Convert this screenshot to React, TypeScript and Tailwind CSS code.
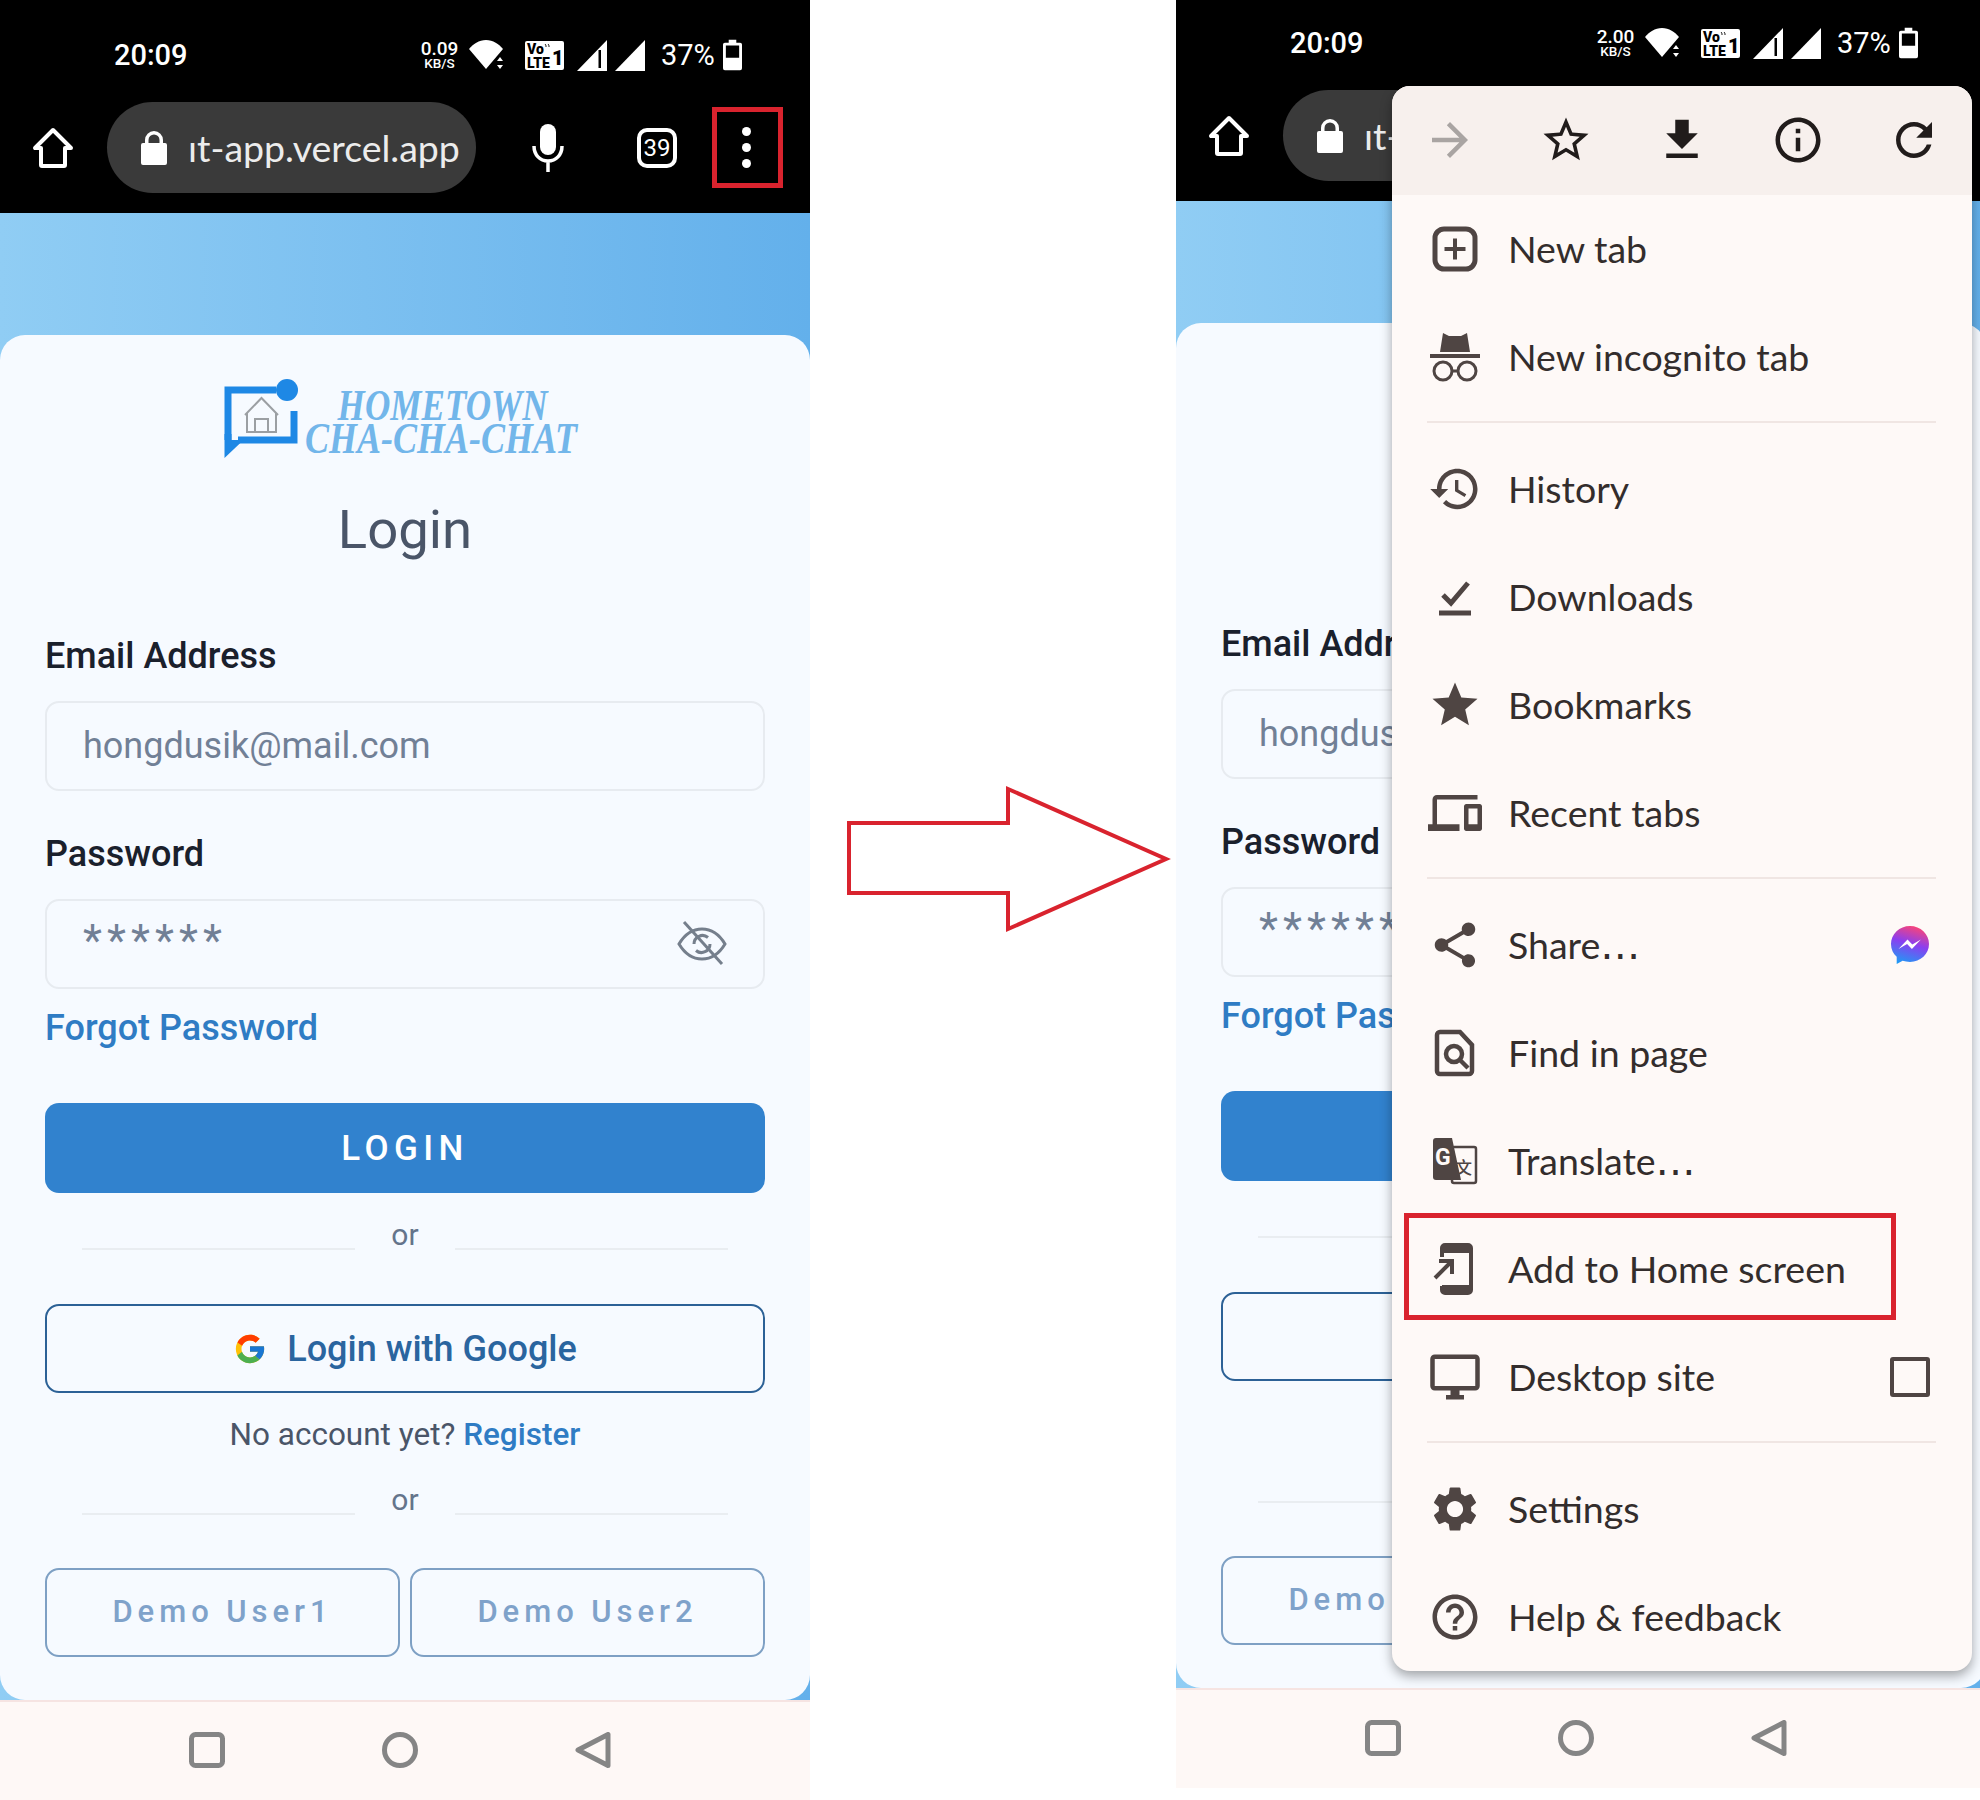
import React from "react";

const MENU_FONT = "font-['Lato','Noto_Sans',sans-serif]";

function Mat({ d, size = 54, className = "" }: { d: string; size?: number; className?: string }) {
  return (
    <svg width={size} height={size} viewBox="0 0 24 24" fill="currentColor" className={className}>
      <path d={d} />
    </svg>
  );
}

const P = {
  forward: "M12 4l-1.41 1.41L16.17 11H4v2h12.17l-5.58 5.59L12 20l8-8z",
  starO: "M22 9.24l-7.19-.62L12 2 9.19 8.63 2 9.24l5.46 4.73L5.82 21 12 17.27 18.18 21l-1.63-7.03L22 9.24zM12 15.4l-3.76 2.27 1-4.28-3.32-2.88 4.38-.38L12 6.1l1.71 4.04 4.38.38-3.32 2.88 1 4.28L12 15.4z",
  download: "M19 9h-4V3H9v6H5l7 7 7-7zM5 18v2h14v-2H5z",
  info: "M11 7h2v2h-2zm0 4h2v6h-2zm1-9C6.48 2 2 6.48 2 12s4.48 10 10 10 10-4.48 10-10S17.52 2 12 2zm0 18c-4.41 0-8-3.59-8-8s3.59-8 8-8 8 3.59 8 8-3.59 8-8 8z",
  refresh: "M17.65 6.35C16.2 4.9 14.21 4 12 4c-4.42 0-7.99 3.58-7.99 8s3.57 8 7.99 8c3.73 0 6.84-2.55 7.73-6h-2.08c-.82 2.33-3.04 4-5.65 4-3.31 0-6-2.69-6-6s2.69-6 6-6c1.66 0 3.14.69 4.22 1.78L13 11h7V4l-2.35 2.35z",
  history: "M13 3c-4.97 0-9 4.03-9 9H1l3.89 3.89.07.14L9 12H6c0-3.87 3.13-7 7-7s7 3.13 7 7-3.13 7-7 7c-1.93 0-3.68-.79-4.94-2.06l-1.42 1.42C8.27 19.99 10.51 21 13 21c4.97 0 9-4.03 9-9s-4.03-9-9-9zm-1 5v5l4.28 2.54.72-1.21-3.5-2.08V8H12z",
  star: "M12 17.27L18.18 21l-1.64-7.03L22 9.24l-7.19-.61L12 2 9.19 8.63 2 9.24l5.46 4.73L5.82 21z",
  devices: "M4 6h18V4H4c-1.1 0-2 .9-2 2v11H0v3h14v-3H4V6zm19 2h-6c-.55 0-1 .45-1 1v10c0 .55.45 1 1 1h6c.55 0 1-.45 1-1V9c0-.55-.45-1-1-1zm-1 9h-4v-7h4v7z",
  share: "M18 16.08c-.76 0-1.44.3-1.96.77L8.91 12.7c.05-.23.09-.46.09-.7s-.04-.47-.09-.7l7.05-4.11c.54.5 1.25.81 2.04.81 1.66 0 3-1.34 3-3s-1.34-3-3-3-3 1.34-3 3c0 .24.04.47.09.7L8.04 9.81C7.5 9.31 6.79 9 6 9c-1.66 0-3 1.34-3 3s1.34 3 3 3c.79 0 1.5-.31 2.04-.81l7.12 4.16c-.05.21-.08.43-.08.65 0 1.61 1.31 2.92 2.92 2.92 1.61 0 2.92-1.31 2.92-2.92s-1.31-2.92-2.92-2.92z",
  settings: "M19.14 12.94c.04-.3.06-.61.06-.94 0-.32-.02-.64-.07-.94l2.03-1.58c.18-.14.23-.41.12-.61l-1.92-3.32c-.12-.22-.37-.29-.59-.22l-2.39.96c-.5-.38-1.03-.7-1.62-.94l-.36-2.54c-.04-.24-.24-.41-.48-.41h-3.84c-.24 0-.43.17-.47.41l-.36 2.54c-.59.24-1.13.57-1.62.94l-2.39-.96c-.22-.08-.47 0-.59.22L2.74 8.87c-.12.21-.08.47.12.61l2.03 1.58c-.05.3-.09.63-.09.94s.02.64.07.94l-2.03 1.58c-.18.14-.23.41-.12.61l1.92 3.32c.12.22.37.29.59.22l2.39-.96c.5.38 1.03.7 1.62.94l.36 2.54c.05.24.24.41.48.41h3.84c.24 0 .44-.17.47-.41l.36-2.54c.59-.24 1.13-.56 1.62-.94l2.39.96c.22.08.47 0 .59-.22l1.92-3.32c.12-.22.07-.47-.12-.61l-2.01-1.58zM12 15.6c-1.98 0-3.6-1.62-3.6-3.6s1.62-3.6 3.6-3.6 3.6 1.62 3.6 3.6-1.62 3.6-3.6 3.6z",
  help: "M11 18h2v-2h-2v2zm1-16C6.48 2 2 6.48 2 12s4.48 10 10 10 10-4.48 10-10S17.52 2 12 2zm0 18c-4.41 0-8-3.59-8-8s3.59-8 8-8 8 3.59 8 8-3.59 8-8 8zm0-14c-2.21 0-4 1.79-4 4h2c0-1.1.9-2 2-2s2 .9 2 2c0 2-3 1.75-3 5h2c0-2.25 3-2.5 3-5 0-2.21-1.79-4-4-4z",
  desktop: "M21 2H3c-1.1 0-2 .9-2 2v12c0 1.1.9 2 2 2h7v2H8v2h8v-2h-2v-2h7c1.1 0 2-.9 2-2V4c0-1.1-.9-2-2-2zm0 14H3V4h18v12z",
};

function IconBox({ children }: { children: React.ReactNode }) {
  return (
    <svg width={54} height={54} viewBox="0 0 54 54" fill="none" stroke="currentColor" strokeWidth={4}>
      {children}
    </svg>
  );
}

const IconNewTab = () => (
  <IconBox>
    <rect x="7" y="7" width="40" height="40" rx="9" strokeWidth={5} />
    <path d="M27 16.500v21M16.500 27h21" strokeWidth={4} />
  </IconBox>
);
const IconIncognito = () => (
  <IconBox>
    <path d="M15 3l6 3h12l6-3 3 19H12z" fill="currentColor" stroke="none" />
    <path d="M2 26h50" strokeWidth={4} />
    <circle cx="15" cy="41" r="9" strokeWidth={3} />
    <circle cx="39" cy="41" r="9" strokeWidth={3} />
    <path d="M24 41h6" strokeWidth={3} />
  </IconBox>
);
const IconCheck = () => (
  <IconBox>
    <path d="M15 25l8 8 17-20" strokeWidth={5} />
    <path d="M11 43h32" strokeWidth={5} />
  </IconBox>
);
const IconFind = () => (
  <IconBox>
    <path d="M12 6h20l12 13v26a3 3 0 0 1-3 3H12a3 3 0 0 1-3-3V9a3 3 0 0 1 3-3z" strokeWidth={4.500} />
    <circle cx="26" cy="28" r="8" strokeWidth={4.500} />
    <path d="M32 34l8 8" strokeWidth={4.500} />
  </IconBox>
);
const IconTranslate = () => (
  <IconBox>
    <rect x="24" y="13" width="24" height="36" rx="2" strokeWidth={2.500} />
    <path d="M8 4h16l9 42H8a3 3 0 0 1-3-3V7a3 3 0 0 1 3-3z" fill="currentColor" stroke="none" />
    <text x="7" y="31" fontSize="23" fontWeight="700" fill="#fef9f7" stroke="none" fontFamily="Roboto, sans-serif">G</text>
    <text x="27" y="40" fontSize="17" fontWeight="500" fill="currentColor" stroke="none" fontFamily="'Noto Sans CJK SC', sans-serif">文</text>
  </IconBox>
);
const IconAddHome = () => (
  <IconBox>
    <path d="M14 15V6a3 3 0 0 1 3-3h23a3 3 0 0 1 3 3v42a3 3 0 0 1-3 3H17a3 3 0 0 1-3-3v-4" strokeWidth={4} />
    <path d="M14 3h29v8H14zM14 43h29v8H14z" fill="currentColor" stroke="none" />
    <path d="M7 36l16-16M11 19h13v13" strokeWidth={4} />
  </IconBox>
);

function Messenger() {
  return (
    <svg width={42} height={42} viewBox="0 0 40 40">
      <defs>
        <linearGradient id="msgr" x1="0.3" y1="1" x2="0.6" y2="0">
          <stop offset="0" stopColor="#1e9bf5" />
          <stop offset="0.55" stopColor="#8a3ff0" />
          <stop offset="1" stopColor="#f8447a" />
        </linearGradient>
      </defs>
      <path d="M20 1C9.500 1 1 9.100 1 19c0 5.200 2.200 9.700 5.700 12.800V39l5.900-3.200c2.200.7 4.700 1.100 7.400 1.100 10.500 0 19-7.900 19-17.900S30.500 1 20 1z" fill="url(#msgr)" />
      <path d="M8.500 24l9-9.500 4.800 5 8.600-5-9 9.500-4.800-5z" fill="#fff" />
    </svg>
  );
}

function GoogleG() {
  return (
    <svg width={34} height={34} viewBox="0 0 48 48">
      <path fill="#FFC107" d="M43.611 20.083H42V20H24v8h11.303c-1.649 4.657-6.08 8-11.303 8-6.627 0-12-5.373-12-12s5.373-12 12-12c3.059 0 5.842 1.154 7.961 3.039l5.657-5.657C34.046 6.053 29.268 4 24 4 12.955 4 4 12.955 4 24s8.955 20 20 20 20-8.955 20-20c0-1.341-.138-2.65-.389-3.917z" />
      <path fill="#FF3D00" d="M6.306 14.691l6.571 4.819C14.655 15.108 18.961 12 24 12c3.059 0 5.842 1.154 7.961 3.039l5.657-5.657C34.046 6.053 29.268 4 24 4 16.318 4 9.656 8.337 6.306 14.691z" />
      <path fill="#4CAF50" d="M24 44c5.166 0 9.86-1.977 13.409-5.192l-6.19-5.238A11.91 11.91 0 0 1 24 36c-5.202 0-9.619-3.317-11.283-7.946l-6.522 5.025C9.505 39.556 16.227 44 24 44z" />
      <path fill="#1976D2" d="M43.611 20.083H42V20H24v8h11.303a12.04 12.04 0 0 1-4.087 5.571l6.193 5.237C36.971 39.205 44 34 44 24c0-1.341-.138-2.65-.389-3.917z" />
    </svg>
  );
}

function StatusBar({ speed }: { speed: string }) {
  return (
    <div className="flex h-[48px] items-center font-['Roboto',sans-serif] text-white">
      <div className="ml-[114px] w-[305px] text-[29px] font-medium leading-none">20:09</div>
      <div className="flex w-[41px] flex-col items-center font-medium leading-none">
        <span className="text-[19px] leading-[16px]">{speed}</span>
        <span className="text-[13.5px] leading-[12px]">KB/S</span>
      </div>
      <svg width={36} height={30} viewBox="0 0 36 30" className="ml-[9px]" fill="#fff">
        <path d="M0 9C4 4 10 0 17 0s13 4 17 9L17 29z" />
        <path d="M31 17l3 4h-6zM31 29l3-4h-6z" />
      </svg>
      <svg width={39} height={29} viewBox="0 0 39 29" className="ml-[20px]">
        <path d="M2 0h35a2 2 0 0 1 2 2v25a2 2 0 0 1-2 2H2a2 2 0 0 1-2-2V2a2 2 0 0 1 2-2z" fill="#fff" />
        <text x="2" y="13" fontSize="14" fontWeight="900" fill="#000" fontFamily="Roboto, sans-serif">Vo</text>
        <path d="M20 3c1 1 1 2 1 3M23 3c1 1 1 2 1 3" stroke="#000" strokeWidth={1} fill="none" />
        <text x="2" y="27" fontSize="14" fontWeight="900" fill="#000" fontFamily="Roboto, sans-serif">LTE</text>
        <text x="27" y="24" fontSize="20" fontWeight="900" fill="#000" fontFamily="Roboto, sans-serif">1</text>
      </svg>
      <svg width={30} height={31} viewBox="0 0 30 31" className="ml-[13px]" fill="#fff">
        <path d="M30 0v31H0zM24 10h-2.500v18H24z" fillRule="evenodd" />
      </svg>
      <svg width={30} height={31} viewBox="0 0 30 31" className="ml-[8px]" fill="#fff">
        <path d="M30 0v31H0z" />
      </svg>
      <div className="ml-[16px] text-[29px] leading-none">37%</div>
      <svg width={19} height={32} viewBox="0 0 20 32" className="ml-[8px]" fill="#fff">
        <path d="M6 0h8v3h4a2 2 0 0 1 2 2v25a2 2 0 0 1-2 2H2a2 2 0 0 1-2-2V5a2 2 0 0 1 2-2h4zM3 6v13h14V6z" fillRule="evenodd" />
      </svg>
    </div>
  );
}

function Toolbar({ boxed }: { boxed: boolean }) {
  return (
    <div className="mt-[23px] flex h-[91px] items-center">
      <svg width={42} height={42} viewBox="0 0 42 42" className="ml-[32px]" fill="none" stroke="#fff" strokeWidth={4} strokeLinejoin="round">
        <path d="M21 3L3 21h6v17a1 1 0 0 0 1 1h22a1 1 0 0 0 1-1V21h6z" />
      </svg>
      <div className={`ml-[33px] flex h-[91px] w-[369px] items-center rounded-[46px] bg-[#3a3a3a] pl-[34px] ${MENU_FONT}`}>
        <svg width={26} height={34} viewBox="0 0 26 34" fill="#fff">
          <path d="M4 12V9a9 9 0 0 1 18 0v3h2a2 2 0 0 1 2 2v18a2 2 0 0 1-2 2H2a2 2 0 0 1-2-2V14a2 2 0 0 1 2-2zm3.500 0h11V9a5.500 5.500 0 0 0-11 0z" fillRule="evenodd" />
        </svg>
        <span className="ml-[21px] text-[37.5px] leading-none text-[#ececec]">ıt-app.vercel.app</span>
      </div>
      <svg width={32} height={48} viewBox="0 0 32 48" className="ml-[56px]" fill="none">
        <rect x="8" y="0" width="16" height="31" rx="8" fill="#fff" />
        <path d="M2 22c0 9 6 15 14 15s14-6 14-15M16 37v11" stroke="#fff" strokeWidth={3.500} />
      </svg>
      <div className="ml-[73px] flex h-[40px] w-[40px] items-center justify-center rounded-[10px] border-[4px] border-white font-['Roboto',sans-serif] text-[24px] leading-none text-white">39</div>
      <div className="ml-[65px] flex h-[41px] w-[9px] flex-col justify-between">
        <div className="h-[9px] w-[9px] rounded-full bg-white" />
        <div className="h-[9px] w-[9px] rounded-full bg-white" />
        <div className="h-[9px] w-[9px] rounded-full bg-white" />
      </div>
      {boxed && <div className="absolute left-[712px] top-[107px] h-[81px] w-[71px] border-[5px] border-[#d9232e]" />}
    </div>
  );
}

function Logo() {
  return (
    <div className="mt-[44px] flex h-[82px] justify-center pr-[10px]">
      <svg width={74} height={82} viewBox="0 0 74 82" fill="none">
        <path d="M52 11H4v50M70 32v29H14" stroke="#1e88e5" strokeWidth={7} />
        <path d="M0.500 55h7v6h12L0.500 79z" fill="#1e88e5" />
        <circle cx="63" cy="11" r="11" fill="#1e88e5" />
        <path d="M21 36l16.500-17L54 36M23 34v19h29V34M31 53V40h13v13" stroke="#9b9fa3" strokeWidth={2} />
      </svg>
      <div className="ml-[8px] flex w-[271px] flex-col items-center font-['Liberation_Serif',serif] text-[45px] font-bold italic leading-[33px] text-[#72b6ea]">
        <span className="ml-[4px] mt-[10px] inline-block h-[33px] scale-x-[0.78] whitespace-nowrap">HOMETOWN</span>
        <span className="inline-block h-[33px] scale-x-[0.8] whitespace-nowrap">CHA-CHA-CHAT</span>
      </div>
    </div>
  );
}

function OrRow({ top }: { top: string }) {
  return (
    <div className={`flex h-[40px] items-start px-[37px] ${top}`}>
      <div className="mt-[33px] h-[1.5px] flex-1 bg-[#e9edf1]" />
      <div className="w-[100px] text-center text-[30px] leading-[40px] text-[#64748b]">or</div>
      <div className="mt-[33px] h-[1.5px] flex-1 bg-[#e9edf1]" />
    </div>
  );
}

function Card() {
  return (
    <div className="flex flex-1 flex-col rounded-[25px] bg-[#f6faff] px-[45px] font-['Roboto',sans-serif]">
      <Logo />
      <div className="mt-[38px] h-[60px] text-center text-[54.5px] leading-[60px] text-[#4a5568]">Login</div>
      <div className="mt-[77px] h-[40px] text-[36px] font-medium leading-[40px] text-[#1a202c]">Email Address</div>
      <div className="mt-[25px] flex h-[90px] items-center rounded-[14px] border-2 border-[#e7ebf0] pl-[36px] text-[36px] text-[#718096]">hongdusik@mail.com</div>
      <div className="mt-[43px] h-[40px] text-[36px] font-medium leading-[40px] text-[#1a202c]">Password</div>
      <div className="mt-[25px] flex h-[90px] items-center justify-between rounded-[14px] border-2 border-[#e7ebf0] pl-[36px] pr-[35px] text-[#718096]">
        <span className="mb-[6px] text-[44px] leading-[40px] tracking-[0.115em]">******</span>
        <svg width={52} height={46} viewBox="0 0 52 46" fill="none" stroke="#757f8c" strokeWidth={3} className="mb-[2px]">
          <path d="M3 24C9 14 17 9 26 9s17 5 23 15c-6 10-14 15-23 15S9 34 3 24z" />
          <path d="M18 24a8.500 8.500 0 0 1 14-6.500M34 24a8.500 8.500 0 0 1-14 6.500" />
          <path d="M8 2l38 42" />
        </svg>
      </div>
      <div className="mt-[19px] h-[40px] text-[36px] font-medium leading-[40px] text-[#2f7cc4]">Forgot Password</div>
      <div className="mt-[55px] flex h-[90px] items-center justify-center rounded-[14px] bg-[#3182ce] pt-[3px] text-[35px] font-medium tracking-[0.155em] text-white">LOGIN</div>
      <OrRow top="mt-[22px]" />
      <div className="mt-[49px] flex h-[89px] items-center justify-center gap-[20px] rounded-[14px] border-2 border-[#2c6196] text-[36px] font-medium text-[#2a659f]">
        <GoogleG />
        <span>Login with Google</span>
      </div>
      <div className="mt-[22px] h-[40px] text-center text-[31.5px] leading-[40px] text-[#4a5568]">
        No account yet? <span className="font-medium text-[#2f7cc4]">Register</span>
      </div>
      <OrRow top="mt-[25px]" />
      <div className="mt-[48px] flex gap-[10px]">
        {["Demo User1", "Demo User2"].map((t) => (
          <div key={t} className="flex h-[89px] flex-1 items-center justify-center rounded-[14px] border-2 border-[#7ea0c4] text-[31px] font-medium tracking-[0.16em] text-[#7fa2ca]">{t}</div>
        ))}
      </div>
    </div>
  );
}

function NavBar() {
  return (
    <div className="flex h-[100px] shrink-0 items-center justify-center gap-[157px] border-t-2 border-[#f6e4e2] bg-[#fef8f6] pb-[2px] pr-[11px]">
      <svg width={36} height={36} viewBox="0 0 36 36" fill="none" stroke="#858585" strokeWidth={5}>
        <rect x="2.500" y="2.500" width="31" height="31" rx="4" />
      </svg>
      <svg width={36} height={36} viewBox="0 0 36 36" fill="none" stroke="#858585" strokeWidth={5}>
        <circle cx="18" cy="18" r="15.500" />
      </svg>
      <svg width={36} height={36} viewBox="0 0 36 36" fill="none" stroke="#858585" strokeWidth={5} strokeLinejoin="round">
        <path d="M33 2.500v31L3 18z" />
      </svg>
    </div>
  );
}

function Row({ icon, label, dots, right }: { icon: React.ReactNode; label: string; dots?: boolean; right?: React.ReactNode }) {
  return (
    <div className="flex h-[108px] items-center pl-[36px] text-[#4f4543]">
      <div className="h-[54px] w-[54px] shrink-0">{icon}</div>
      <span className="ml-[26px] flex-1 text-[37.5px] leading-none text-[#332d2c]">
        {label}
        {dots && <span className="font-['DejaVu_Sans',sans-serif] text-[40px]">…</span>}
      </span>
      {right && <div className="mr-[42px] flex h-[54px] w-[40px] items-center justify-center">{right}</div>}
    </div>
  );
}

const Divider = () => (
  <div className="pb-[12px] pt-[10px]">
    <div className="ml-[35px] h-[2px] w-[509px] bg-[#f0e6e3]" />
  </div>
);

function Menu() {
  return (
    <div className={`absolute left-[216px] top-[98px] w-[580px] overflow-hidden rounded-[18px] bg-[#fef9f7] shadow-[0_5px_12px_rgba(0,0,0,0.35)] ${MENU_FONT}`}>
      <div className="flex h-[109px] items-center gap-[62px] bg-[#f7f0ed] pb-[2px] pl-[31px] text-[#211c1b]">
        <Mat d={P.forward} className="text-[#a9a4a2]" />
        <Mat d={P.starO} />
        <Mat d={P.download} />
        <Mat d={P.info} />
        <Mat d={P.refresh} />
      </div>
      <Row icon={<IconNewTab />} label="New tab" />
      <Row icon={<IconIncognito />} label="New incognito tab" />
      <Divider />
      <Row icon={<Mat d={P.history} />} label="History" />
      <Row icon={<IconCheck />} label="Downloads" />
      <Row icon={<Mat d={P.star} />} label="Bookmarks" />
      <Row icon={<Mat d={P.devices} />} label="Recent tabs" />
      <Divider />
      <Row icon={<Mat d={P.share} />} label="Share" dots right={<Messenger />} />
      <Row icon={<IconFind />} label="Find in page" />
      <Row icon={<IconTranslate />} label="Translate" dots />
      <Row icon={<IconAddHome />} label="Add to Home screen" />
      <Row
        icon={<Mat d={P.desktop} />}
        label="Desktop site"
        right={<div className="h-[40px] w-[40px] rounded-[3px] border-[4.5px] border-[#4f4543]" />}
      />
      <Divider />
      <Row icon={<Mat d={P.settings} />} label="Settings" />
      <Row icon={<Mat d={P.help} />} label="Help & feedback" />
      <div className="absolute left-[12px] top-[1127px] h-[107px] w-[492px] border-[5px] border-[#d9232e]" />
    </div>
  );
}

function Phone({ speed, menu, className }: { speed: string; menu: boolean; className: string }) {
  return (
    <div className={`relative flex h-[1800px] w-[810px] shrink-0 flex-col overflow-hidden ${className}`}>
      <div className="h-[213px] shrink-0 bg-black pt-[31px]">
        <StatusBar speed={speed} />
        <Toolbar boxed={!menu} />
      </div>
      <div className="flex flex-1 flex-col bg-gradient-to-r from-[#90cdf4] to-[#63b0eb] pt-[122px]">
        <Card />
      </div>
      <NavBar />
      {menu && <Menu />}
    </div>
  );
}

export default function App() {
  return (
    <div className="flex h-[1800px] w-[1980px] overflow-hidden bg-white">
      <Phone speed="0.09" menu={false} className="" />
      <div className="w-[366px] shrink-0 pl-[36px] pt-[785px]">
        <svg width={326} height={148} viewBox="0 0 326 148" fill="none" stroke="#d9232e" strokeWidth={4}>
          <path d="M3 38h159V4l158 70-158 70v-36H3z" />
        </svg>
      </div>
      <Phone speed="2.00" menu className="-mt-[12px]" />
    </div>
  );
}
